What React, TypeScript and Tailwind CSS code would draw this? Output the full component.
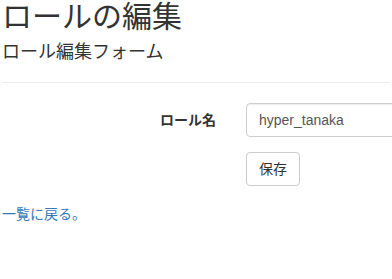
const font = {
  base: "font-['Liberation_Sans','Noto_Sans_CJK_JP',sans-serif]",
};

export default function App() {
  return (
    <div className={`${font.base} bg-white text-[#333] text-[14px] leading-[20px] px-[2px] min-h-[279px] overflow-hidden`}>
      <h1 className="text-[30px] leading-[33px] font-normal pt-0">ロールの編集</h1>
      <h2 className="text-[18px] leading-[20px] font-normal mt-[9px]">ロール編集フォーム</h2>
      <hr className="mt-[20px] border-t border-[#eee]" />

      <form className="mt-[20px] flex flex-col gap-[15px]" onSubmit={(e) => e.preventDefault()}>
        <div className="flex items-center gap-[30px]">
          <label className="w-[214px] shrink-0 text-right font-bold">ロール名</label>
          <input
            className="h-[34px] w-[300px] shrink-0 rounded-[4px] border border-[#ccc] px-[12px] text-[#555] outline-none shadow-[inset_0_1px_1px_rgba(0,0,0,0.075)]"
            defaultValue="hyper_tanaka"
          />
        </div>
        <div className="pl-[244px]">
          <button
            type="submit"
            className="h-[34px] rounded-[4px] border border-[#ccc] bg-white px-[12px] text-[#333]"
          >
            保存
          </button>
        </div>
      </form>

      <a href="#" className="mt-[18px] block text-[#337ab7]">
        一覧に戻る。
      </a>
    </div>
  );
}
